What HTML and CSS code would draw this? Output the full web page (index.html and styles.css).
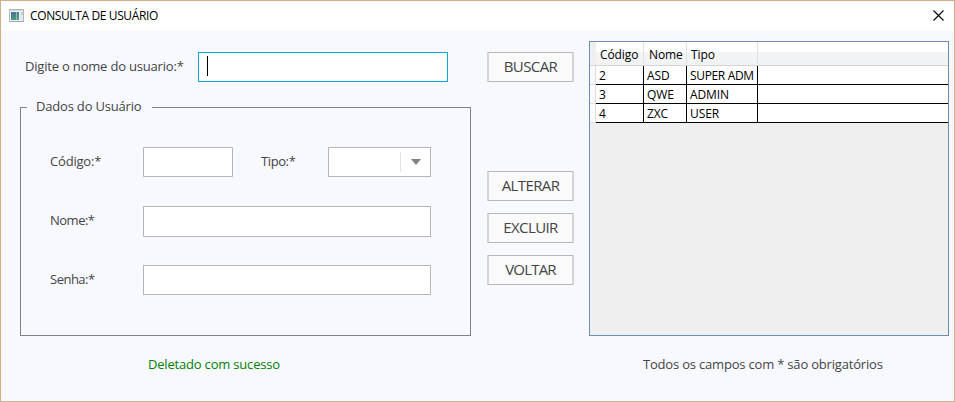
FILE: index.html
```html
<!DOCTYPE html>
<html lang="pt-BR">
<head>
<meta charset="utf-8">
<title>CONSULTA DE USUÁRIO</title>
<link rel="stylesheet" href="styles.css">
</head>
<body>
<div class="window">
  <header class="titlebar">
    <svg class="app-icon" width="15" height="13" viewBox="0 0 15 13">
      <defs><linearGradient id="g" x1="0" y1="0" x2="0.6" y2="1"><stop offset="0" stop-color="#47709a"/><stop offset="1" stop-color="#50a078"/></linearGradient></defs>
      <rect x=".5" y=".5" width="14" height="12" fill="#f2f4f5" stroke="#b4b8bc"/>
      <rect x="1" y="1" width="13" height="1" fill="#d2d6da"/>
      <rect x="2" y="3" width="8" height="8" fill="url(#g)"/>
      <rect x="7" y="3" width="1" height="8" fill="#8fb6bd"/>
      <rect x="11" y="3" width="3" height="8" fill="#dde8ee"/>
      <rect x="12" y="3" width="2" height="3" fill="#b9d2df"/>
      <rect x="1" y="12" width="13" height="1" fill="#a0a5a9"/>
    </svg>
    <h1 class="title">CONSULTA DE USUÁRIO</h1>
    <svg class="close" width="11" height="11" viewBox="0 0 11 11"><path d="M.5 .5L10.5 10.5M10.5 .5L.5 10.5" stroke="#000" stroke-width="1.1"/></svg>
  </header>
  <main class="content">
    <section class="left">
      <div class="search">
        <span class="search-label">Digite o nome do usuario:*</span>
        <div class="field focused"><i class="caret"></i></div>
      </div>
      <div class="group">
        <div class="group-top"><i class="stub"></i><span class="legend">Dados do Usuário</span><i class="rule"></i></div>
        <div class="group-body">
          <div class="form-row">
            <span class="label">Código:*</span>
            <div class="field code"></div>
            <span class="label type">Tipo:*</span>
            <div class="field combo"><div class="drop"><svg width="10" height="6" viewBox="0 0 10 6"><path d="M0 0H10L5 6Z" fill="#808080"/></svg></div></div>
          </div>
          <div class="form-row name"><span class="label tight">Nome:*</span><div class="field wide"></div></div>
          <div class="form-row"><span class="label tight">Senha:*</span><div class="field wide"></div></div>
        </div>
      </div>
      <p class="status">Deletado com sucesso</p>
    </section>
    <nav class="buttons">
      <button class="btn search-btn">BUSCAR</button>
      <button class="btn">ALTERAR</button>
      <button class="btn">EXCLUIR</button>
      <button class="btn last">VOLTAR</button>
    </nav>
    <section class="right">
      <div class="grid">
        <div class="row head"><i></i><span>Código</span><span>Nome</span><span>Tipo</span><b></b></div>
        <div class="row"><i></i><span>2</span><span>ASD</span><span class="long">SUPER ADM</span><b></b></div>
        <div class="row"><i></i><span>3</span><span>QWE</span><span>ADMIN</span><b></b></div>
        <div class="row"><i></i><span>4</span><span>ZXC</span><span>USER</span><b></b></div>
      </div>
      <p class="note">Todos os campos com * são obrigatórios</p>
    </section>
  </main>
</div>
</body>
</html>
```
FILE: styles.css
```css
* { box-sizing: border-box; }
body { margin: 0; font-family: "Open Sans", "Noto Sans", sans-serif; font-size: 13px; letter-spacing: -0.19px; color: #444; }
p, h1 { margin: 0; }
.window { width: 955px; height: 402px; border: 1px solid #d2ae82; background: #f8f9ff; overflow: hidden; }
.titlebar { display: flex; align-items: center; height: 30px; padding: 0 10px 2px 8px; background: #fff; }
.title { flex: 1; margin-left: 6px; padding-top: 1px; font-size: 12px; font-weight: 400; line-height: 19px; letter-spacing: -0.38px; color: #000; white-space: nowrap; }
.content { display: flex; height: 370px; }
.left { width: 451px; margin-left: 19px; padding-top: 21px; }
.search { display: flex; align-items: center; height: 30px; padding-left: 5px; }
.search-label { width: 173px; padding-bottom: 2px; white-space: nowrap; }
.field { height: 30px; background: #fff; border: 1px solid #b6b6b6; }
.focused { display: flex; width: 250px; padding: 3px 0 0 8px; border-color: #0aa5d8; }
.caret { width: 1px; height: 20px; background: #000; }
.group { margin-top: 25px; height: 229px; }
.group-top { display: flex; height: 1px; }
.stub { width: 7px; background: #7f8385; }
.legend { width: 125px; padding-left: 9px; line-height: 18px; margin-top: -10px; height: 18px; white-space: nowrap; }
.rule { flex: 1; background: #7f8385; }
.group-body { height: 228px; padding: 39px 39px 0 29px; border: 1px solid #7f8385; border-top: 0; }
.form-row { display: flex; align-items: center; height: 30px; }
.name { height: 31px; margin: 29px 0 28px; }
.name .field { height: 31px; }
.label { width: 93px; white-space: nowrap; padding-bottom: 2px; }
.name .label { padding-bottom: 4px; }
.tight { letter-spacing: -0.5px; }
.code { width: 90px; }
.type { width: 67px; margin-left: 28px; letter-spacing: -0.4px; }
.combo { width: 103px; padding: 4px 0; display: flex; justify-content: flex-end; }
.drop { width: 30px; height: 20px; border-left: 1px solid #e2e2e2; display: flex; align-items: center; padding-left: 10px; }
.wide { width: 288px; }
.status { margin: 19px 0 0 128px; line-height: 19px; color: #008000; white-space: nowrap; }
.buttons { display: flex; flex-direction: column; gap: 12px; width: 87px; margin-left: 16px; padding-top: 21px; }
.btn { width: 87px; height: 30px; padding: 0 0 2px; font: 15px/20px "Open Sans", "Noto Sans", sans-serif; letter-spacing: -0.6px; color: #444; background: #fafafa; border: 1px solid #b8b8b8; border-left: 2px solid #d6d6d6; border-right: 2px solid #d6d6d6; border-radius: 0; }
.last { letter-spacing: -0.8px; }
.search-btn { margin-bottom: 77px; }
.right { width: 360px; margin-left: 15px; padding-top: 10px; }
.grid { height: 295px; border: 1px solid #6b8fb3; background: #efefef; }
.row { display: grid; grid-template-columns: 6px 48px 43px 71px 1fr; grid-template-rows: 19px; height: 19px; font-size: 12px; line-height: 20px; letter-spacing: -0.1px; color: #000; }
.row i { background: #fbfbfb; border-right: 1px solid #dcdcdc; border-bottom: 1px solid #dcdcdc; }
.row span, .row b { background: #fff; border-bottom: 1px solid #000; white-space: nowrap; }
.row span { border-right: 1px solid #000; padding-left: 3px; }
.row .long { letter-spacing: -0.35px; }
.row.head { height: 24px; grid-template-rows: 24px; line-height: 26px; }
.head i { background: #efefef; border-right: 0; border-bottom-color: #d5d5d5; }
.row.head span, .row.head b { background: linear-gradient(#fff 10px, #f4f5f7 10px, #f1f2f4); border-bottom-color: #d5d5d5; }
.row.head span { padding-left: 4px; border-right-color: #e0e1e2; }
.row.head span + span { padding-left: 5px; }
.row.head span:nth-of-type(3) { padding-left: 4px; }
.note { margin: 19px 0 0 54px; line-height: 19px; white-space: nowrap; }
```
